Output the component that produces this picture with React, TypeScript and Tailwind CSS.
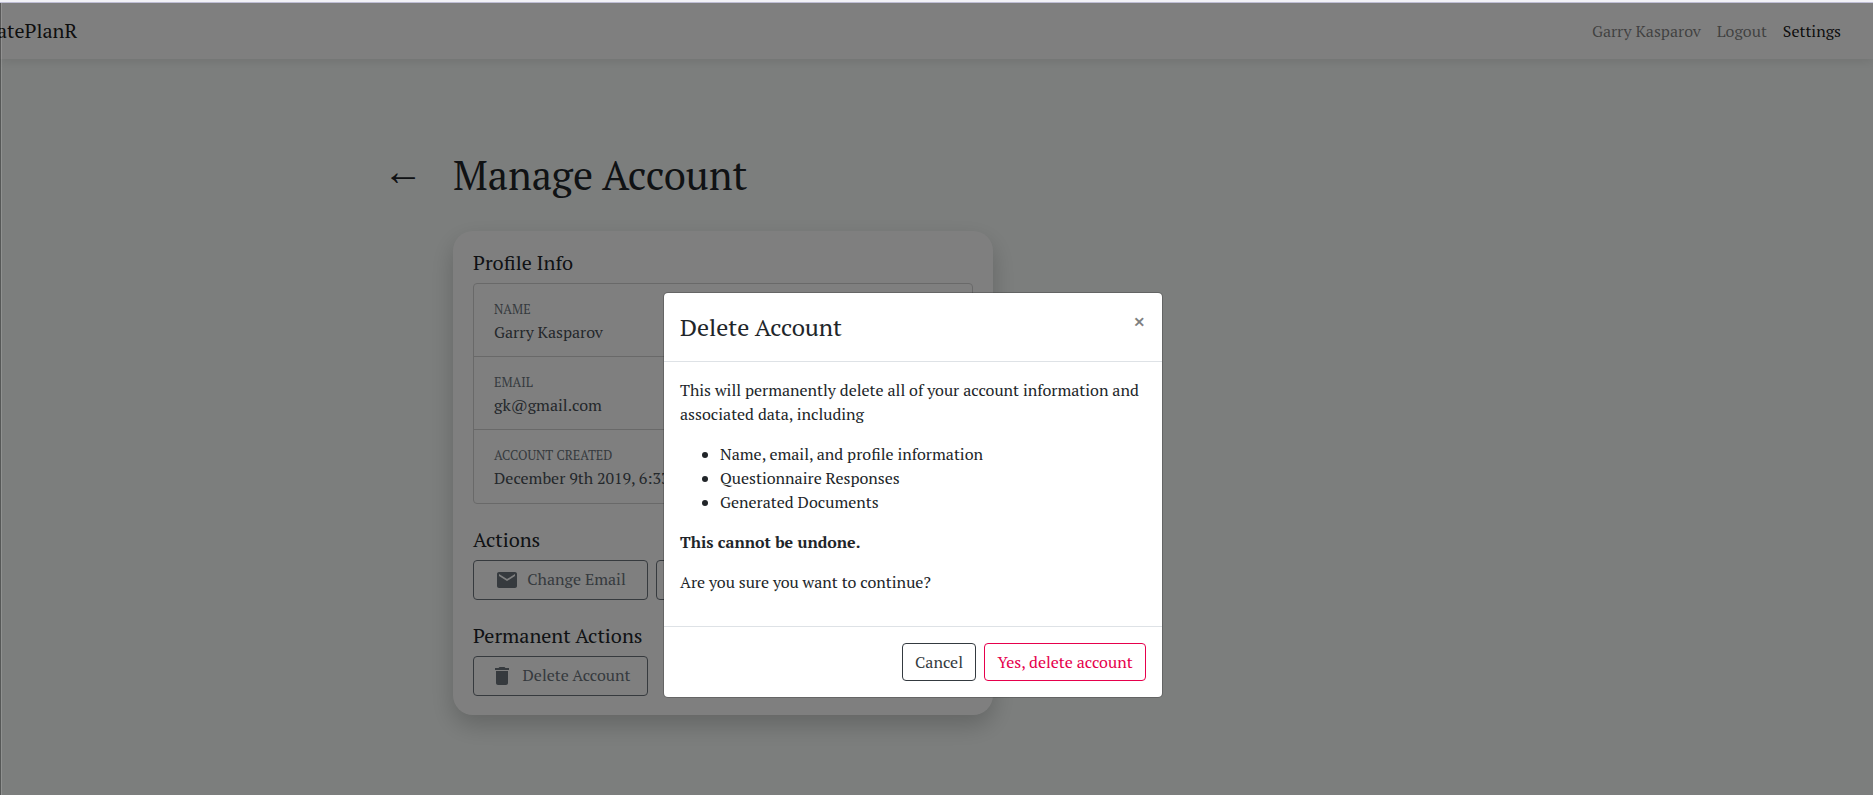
import type { ReactNode } from "react";
import { MdDelete, MdMail } from "react-icons/md";

const profile = [
  { label: "NAME", value: "Garry Kasparov" },
  { label: "EMAIL", value: "gk@gmail.com" },
  { label: "ACCOUNT CREATED", value: "December 9th 2019, 6:33" },
];

function Navbar() {
  return (
    <nav className="flex h-14 items-center justify-between bg-white pr-8 shadow-[0_2px_10px_rgba(20,0,10,0.1)]">
      <span className="-ml-[3px] text-xl leading-[30px] text-black/90">atePlanR</span>
      <div className="flex gap-4 leading-6 text-black/50">
        <span>Garry Kasparov</span>
        <span>Logout</span>
        <span className="text-black/90">Settings</span>
      </div>
    </nav>
  );
}

function OutlineButton({ icon, children }: { icon?: ReactNode; children?: ReactNode }) {
  return (
    <button className="flex h-10 w-[175px] items-center justify-center gap-2 rounded border border-[#6c757d] text-[#6c757d]">
      {icon}
      <span className="-mt-0.5 leading-6">{children}</span>
    </button>
  );
}

function AccountCard() {
  return (
    <section className="h-[484px] w-[540px] rounded-[20px] bg-white p-5 shadow-[0_10px_25px_rgba(0,0,0,0.2)]">
      <h5 className="mb-2 text-xl leading-6">Profile Info</h5>
      <ul className="rounded border border-[#d2d2d2] text-[#495057]">
        {profile.map((row) => (
          <li key={row.label} className="h-[73px] border-b border-[#d2d2d2] px-5 pt-3 last:border-b-0">
            <div className="pt-1 text-[12.8px] leading-5 text-[#6c757d]">{row.label}</div>
            <div className="leading-6">{row.value}</div>
          </li>
        ))}
      </ul>
      <h5 className="mt-6 mb-2 text-xl leading-6">Actions</h5>
      <div className="flex gap-2">
        <OutlineButton icon={<MdMail className="size-6" />}>Change Email</OutlineButton>
        <OutlineButton />
      </div>
      <h5 className="mt-6 mb-2 text-xl leading-6">Permanent Actions</h5>
      <OutlineButton icon={<MdDelete className="size-6 -translate-x-px" />}>Delete Account</OutlineButton>
    </section>
  );
}

function DeleteDialog() {
  return (
    <div className="mt-[289px] ml-[661px] h-[406px] w-[500px] rounded-[5px] border border-black/20 bg-white bg-clip-padding">
      <header className="flex items-start justify-between border-b border-[#dee2e6] p-4">
        <h4 className="text-2xl leading-9">Delete Account</h4>
        <button className="text-2xl font-bold leading-6 text-black/50">×</button>
      </header>
      <div className="p-4 leading-6">
        <p className="mb-4">
          This will permanently delete all of your account information and associated data, including
        </p>
        <ul className="mb-4 list-disc pl-10">
          <li>Name, email, and profile information</li>
          <li>Questionnaire Responses</li>
          <li>Generated Documents</li>
        </ul>
        <p className="mb-4 font-bold">This cannot be undone.</p>
        <p className="mb-4">Are you sure you want to continue?</p>
      </div>
      <footer className="flex justify-end gap-2 border-t border-[#dee2e6] p-4 leading-6">
        <button className="h-[38px] w-[74px] rounded border border-[#343a40] text-[#343a40]">Cancel</button>
        <button className="h-[38px] w-[162px] rounded border border-[#e6004c] text-[#e6004c]">Yes, delete account</button>
      </footer>
    </div>
  );
}

export default function App() {
  return (
    <div className="flex h-[795px] flex-col overflow-hidden border-t-2 border-[#f2f2f7] bg-[#f9fdfb] font-['PT_Serif','Noto_Serif','Liberation_Serif',serif] text-base text-[#212529]">
      <div className="h-px shrink-0 bg-[#c6c5dc]" />
      <div className="relative grow">
        <Navbar />
        <main className="ml-[383px] flex items-start gap-[30px] pt-[92px]">
          <span className="-mt-[5px] w-10 text-[40px] leading-12 text-[#212529]">←</span>
          <div>
            <h1 className="mb-8 text-[40px] leading-12">Manage Account</h1>
            <AccountCard />
          </div>
        </main>
        <div className="absolute inset-0 flex items-start bg-black/50">
          <div className="h-full w-px bg-black/30" />
          <div className="h-full w-px bg-white/15" />
          <DeleteDialog />
        </div>
      </div>
    </div>
  );
}
